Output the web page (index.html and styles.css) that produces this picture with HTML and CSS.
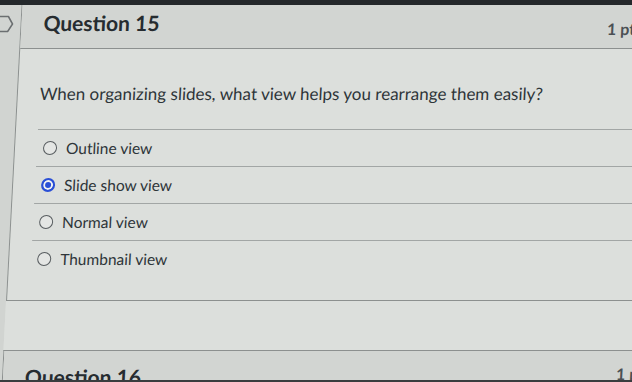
FILE: index.html
```html
<!DOCTYPE html>
<html>
    <head>
        <meta charset="utf-8" />
        <title>Quiz</title>
        <link rel="stylesheet" href="styles.css">
    </head>
    <body>
        <div class="topbar"></div>
        <div class="page">
            <div class="aside">
                <svg class="flag" width="16" height="18" viewBox="0 0 16 18">
                    <path d="M-8 1.5 H9.5 L14 9 L9.5 16.5 H-8" fill="none" stroke="#6b6f71" stroke-width="1.5" stroke-linejoin="round"/>
                </svg>
            </div>
            <div class="main">
                <div class="question">
                    <div class="question-header">
                        <span class="question-name">Question 15</span>
                        <span class="points">1 pts</span>
                    </div>
                    <div class="question-body">
                        <div class="question-text">When organizing slides, what view helps you rearrange them easily?</div>
                        <div class="answers">
                            <div class="answer"><span class="radio"></span><span>Outline view</span></div>
                            <div class="answer"><span class="radio checked"></span><span>Slide show view</span></div>
                            <div class="answer"><span class="radio"></span><span>Normal view</span></div>
                            <div class="answer"><span class="radio"></span><span>Thumbnail view</span></div>
                        </div>
                    </div>
                </div>
                <div class="question next">
                    <div class="question-header">
                        <span class="question-name">Question 16</span>
                        <span class="points">1 pts</span>
                    </div>
                </div>
            </div>
        </div>
        <div class="bottombar"></div>
    </body>
</html>
```
FILE: styles.css
```css
html,
body {
    margin: 0;
    overflow: hidden;
    background-color: #d9dcd9;
    font-family: Lato, "Open Sans", sans-serif;
    color: #2e3539;
}
body {
    width: 632px;
    height: 382px;
}
.topbar {
    position: fixed;
    top: 0;
    left: 0;
    right: 0;
    height: 5px;
    background-color: #24282b;
    z-index: 2;
}
.bottombar {
    position: fixed;
    bottom: 0;
    left: 0;
    right: 0;
    height: 2px;
    background-color: #3a3d3f;
    z-index: 2;
}
.page {
    width: 680px;
    margin-top: -4px;
    display: flex;
    transform: skewX(-3deg);
    transform-origin: 0 0;
}
.aside {
    width: 22px;
    flex: none;
    background-color: #d1d4d1;
    padding-top: 19px;
}
.flag {
    display: block;
}
.main {
    flex: 1;
    background-color: #dcdfdc;
}
.question {
    border-left: 1px solid #8c908f;
    border-bottom: 1px solid #8c908f;
}
.question-header {
    box-sizing: border-box;
    height: 53px;
    display: flex;
    align-items: center;
    justify-content: space-between;
    padding: 0 36px 0 22px;
    background-color: #d2d5d2;
    border-bottom: 1px solid #8c908f;
}
.question-name {
    font-size: 21px;
    font-weight: 700;
    color: #262c30;
}
.points {
    margin-top: 13px;
    font-size: 16px;
    font-weight: 700;
    color: #4b5054;
}
.question-body {
    padding: 33px 0 23px 22px;
}
.question-text {
    font-size: 17px;
    line-height: 24px;
    margin-bottom: 23px;
}
.answer {
    box-sizing: border-box;
    height: 37px;
    display: flex;
    align-items: center;
    gap: 9px;
    padding-left: 6px;
    border-top: 1px solid #a2a6a5;
    font-size: 15.5px;
}
.radio {
    box-sizing: border-box;
    width: 14px;
    height: 14px;
    border: 1.5px solid #585d60;
    border-radius: 50%;
    background-color: #e4e6e4;
}
.radio.checked {
    border: 2px solid #2a4fd6;
    background-color: #2a4fd6;
    box-shadow: inset 0 0 0 2px #f2f3f3;
}
.question.next {
    margin-top: 49px;
    border-top: 1px solid #8c908f;
    border-bottom: none;
}
.question.next .question-header {
    border-bottom: none;
    align-items: flex-start;
    padding-top: 13px;
    padding-right: 9px;
}
.question.next .points {
    margin-top: 0;
}
```
